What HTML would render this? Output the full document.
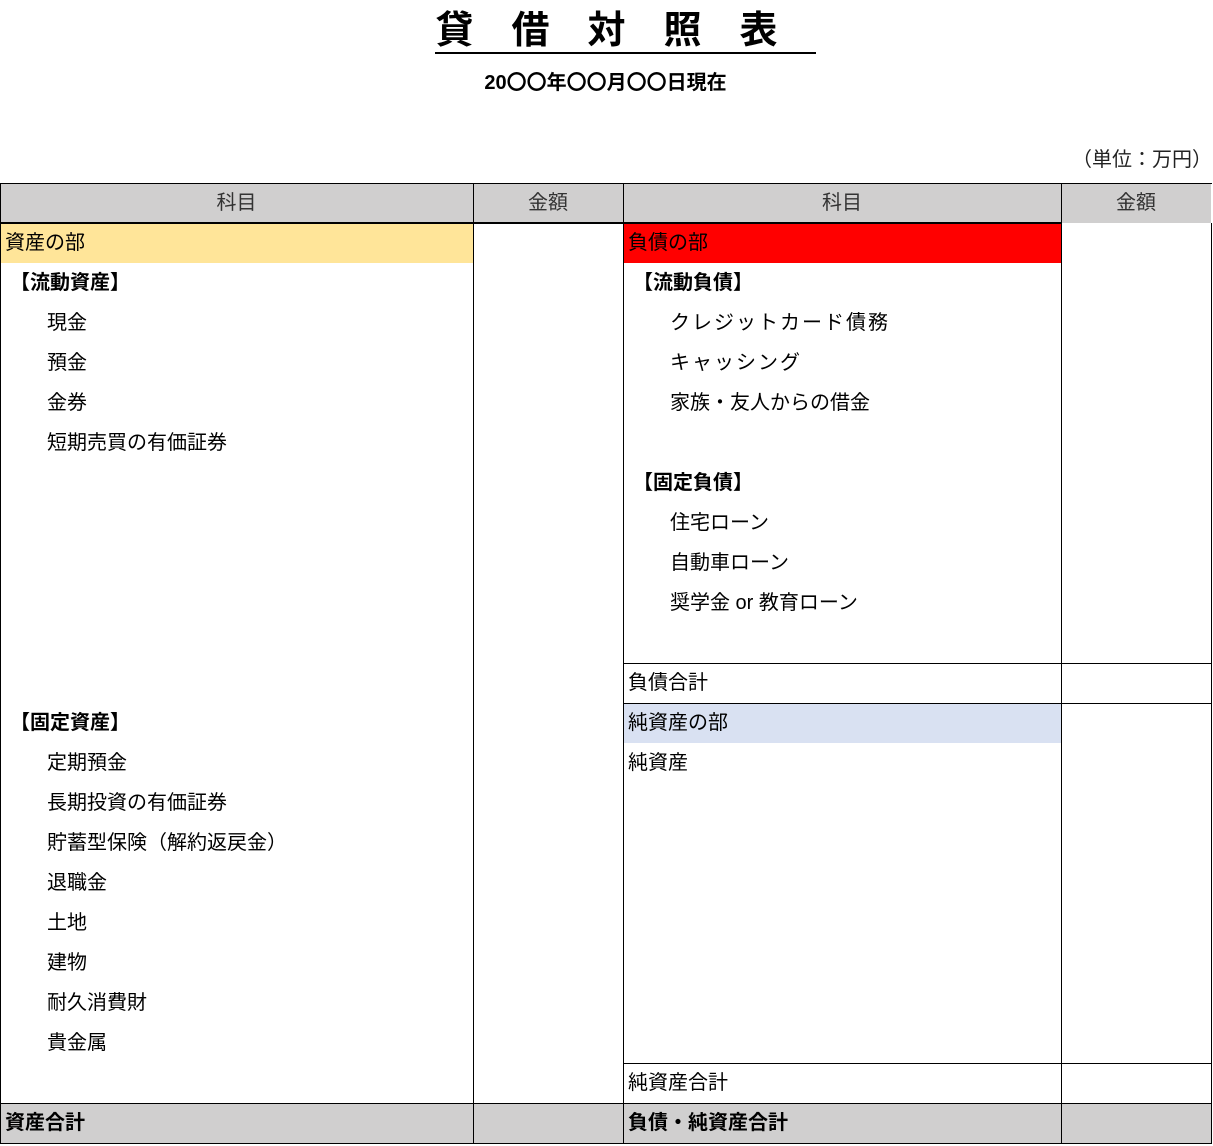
<!DOCTYPE html>
<html><head><meta charset="utf-8"><style>
body{margin:0;width:1213px;height:1146px;background:#fff;position:relative;font-family:"Liberation Sans","Noto Sans CJK JP",sans-serif;color:#000;overflow:hidden}
.a{position:absolute}
.t{position:absolute;font-size:20px;line-height:40px;height:40px;white-space:nowrap}
.b{font-weight:bold}
.h{background:#d0cfcf;position:absolute;height:40px}
.hl{position:absolute;height:1px;background:#000}
.vl{position:absolute;width:1px;background:#000}
</style></head><body>
<div class="a b" style="left:0;width:1213px;top:6px;text-align:center;font-size:38px;line-height:50px;"><span style="border-bottom:2px solid #000;letter-spacing:38px;margin-right:-38px;padding-left:0">貸借対照表</span></div>
<div class="a b" style="left:0;width:1211px;top:68px;text-align:center;font-size:20px;line-height:30px">20〇〇年〇〇月〇〇日現在</div>
<div class="a" style="left:1072px;top:145px;font-size:20px;line-height:30px;color:#222">（単位：万円）</div>

<div class="h" style="left:0;top:183px;width:1211px"></div>
<div class="a" style="left:1px;top:224px;width:472px;height:39px;background:#ffe599"></div>
<div class="a" style="left:624px;top:224px;width:437px;height:39px;background:#ff0000"></div>
<div class="a" style="left:624px;top:704px;width:437px;height:39px;background:#d9e1f2"></div>
<div class="h" style="left:0;top:1103px;width:1211px"></div>

<div class="t" style="left:0;width:473px;top:183px;text-align:center;color:#333">科目</div>
<div class="t" style="left:473px;width:150px;top:183px;text-align:center;color:#333">金額</div>
<div class="t" style="left:623px;width:438px;top:183px;text-align:center;color:#333">科目</div>
<div class="t" style="left:1061px;width:150px;top:183px;text-align:center;color:#333">金額</div>

<div class="t" style="left:5px;top:223px">資産の部</div>
<div class="t b" style="left:10px;top:263px">【流動資産】</div>
<div class="t" style="left:47px;top:303px">現金</div>
<div class="t" style="left:47px;top:343px">預金</div>
<div class="t" style="left:47px;top:383px">金券</div>
<div class="t" style="left:47px;top:423px">短期売買の有価証券</div>
<div class="t b" style="left:10px;top:703px">【固定資産】</div>
<div class="t" style="left:47px;top:743px">定期預金</div>
<div class="t" style="left:47px;top:783px">長期投資の有価証券</div>
<div class="t" style="left:47px;top:823px">貯蓄型保険（解約返戻金）</div>
<div class="t" style="left:47px;top:863px">退職金</div>
<div class="t" style="left:47px;top:903px">土地</div>
<div class="t" style="left:47px;top:943px">建物</div>
<div class="t" style="left:47px;top:983px">耐久消費財</div>
<div class="t" style="left:47px;top:1023px">貴金属</div>
<div class="t b" style="left:5px;top:1103px">資産合計</div>

<div class="t" style="left:628px;top:223px">負債の部</div>
<div class="t b" style="left:633px;top:263px">【流動負債】</div>
<div class="t" style="left:670px;top:303px;letter-spacing:2px">クレジットカード債務</div>
<div class="t" style="left:670px;top:343px;letter-spacing:2px">キャッシング</div>
<div class="t" style="left:670px;top:383px">家族・友人からの借金</div>
<div class="t b" style="left:633px;top:463px">【固定負債】</div>
<div class="t" style="left:670px;top:503px">住宅ローン</div>
<div class="t" style="left:670px;top:543px">自動車ローン</div>
<div class="t" style="left:670px;top:583px">奨学金 or 教育ローン</div>
<div class="t" style="left:628px;top:663px">負債合計</div>
<div class="t" style="left:628px;top:703px">純資産の部</div>
<div class="t" style="left:628px;top:743px">純資産</div>
<div class="t" style="left:628px;top:1063px">純資産合計</div>
<div class="t b" style="left:628px;top:1103px">負債・純資産合計</div>

<div class="hl" style="left:0;top:183px;width:1212px"></div>
<div class="hl" style="left:0;top:222px;width:1061px;height:2px"></div>
<div class="hl" style="left:623px;top:663px;width:589px"></div>
<div class="hl" style="left:623px;top:703px;width:589px"></div>
<div class="hl" style="left:623px;top:1063px;width:589px"></div>
<div class="hl" style="left:0;top:1103px;width:1212px"></div>
<div class="hl" style="left:0;top:1143px;width:1212px"></div>
<div class="vl" style="left:0;top:183px;height:961px"></div>
<div class="vl" style="left:473px;top:183px;height:961px"></div>
<div class="vl" style="left:623px;top:183px;height:961px"></div>
<div class="vl" style="left:1061px;top:183px;height:961px"></div>
<div class="vl" style="left:1211px;top:223px;height:921px"></div>
</body></html>
